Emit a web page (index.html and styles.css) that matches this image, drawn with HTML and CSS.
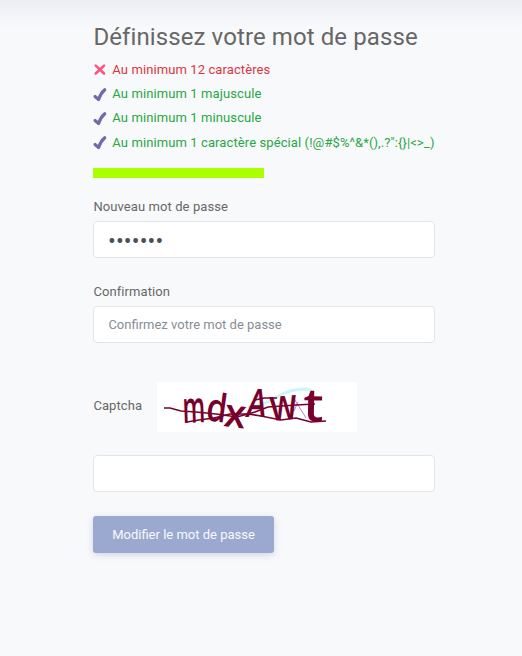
FILE: index.html
```html
<!DOCTYPE html>
<html lang="fr">
<head>
<meta charset="utf-8">
<title>Définissez votre mot de passe</title>
<link rel="stylesheet" href="styles.css">
</head>
<body>
<svg width="0" height="0" class="defs">
  <symbol id="check" viewBox="0 0 12 13"><path d="M1.7 8.2 4.8 10.9C5.8 7.4 7.5 4.7 10.1 2.4" fill="none" stroke="#7467aa" stroke-width="2.7" stroke-linecap="round" stroke-linejoin="round"/></symbol>
</svg>
<main class="form">
  <h1>Définissez votre mot de passe</h1>
  <ul class="rules">
    <li class="bad"><svg class="cross" viewBox="0 0 12 13"><path d="M2.3 3.2 9.5 10M9.5 3.2 2.3 10" stroke="#ff527d" stroke-width="2.2" stroke-linecap="round"/></svg><span>Au minimum 12 caractères</span></li>
    <li><svg><use href="#check"/></svg><span>Au minimum 1 majuscule</span></li>
    <li><svg><use href="#check"/></svg><span>Au minimum 1 minuscule</span></li>
    <li><svg><use href="#check"/></svg><span>Au minimum 1 caractère spécial (!@#$%^&amp;*(),.?":{}|&lt;&gt;_)</span></li>
  </ul>
  <div class="strength"></div>
  <label for="pw">Nouveau mot de passe</label>
  <div class="field"><input id="pw" type="password" value="aaaaaaa"></div>
  <label for="confirm" class="second">Confirmation</label>
  <div class="field"><input id="confirm" type="text" placeholder="Confirmez votre mot de passe"></div>
  <div class="captcha">
    <span>Captcha</span>
    <svg width="200" height="50" viewBox="0 0 200 50">
      <rect width="200" height="50" fill="#fff"/>
      <path d="M91 25Q108 23 120 15T150 7L155 9" fill="none" stroke="#c9f6f8" stroke-width="3"/>
      <path d="M136 15 149 36M141 20l-4 9" fill="none" stroke="#c77bcf" stroke-width="1"/>
      <g class="glyphs">
        <text transform="translate(26 41) rotate(-2) scale(.54 1)" font-size="44">m</text>
        <text transform="translate(48 38) rotate(8) scale(.84 1)" font-size="39">d</text>
        <text transform="translate(66 44) rotate(7) scale(.98 1)" font-size="40">x</text>
        <text transform="translate(88 35) skewX(-10) scale(.76 1)" font-size="39">A</text>
        <text transform="translate(114 39) rotate(-5) scale(.76 1)" font-size="44">w</text>
        <text transform="translate(146 39) rotate(1) scale(1.12 1)" font-size="46">t</text>
      </g>
      <g fill="none" stroke="#78002c" stroke-width="1.7">
        <path d="M7 26 13 26 24 29 39 30 59 32 80 35 98 30 111 25 139 23 158 22"/>
        <path d="M30 40 42 38 57 36 73 32 91 32 104 34 124 38 139 36 154 40 169 39"/>
        <path d="M98 18 107 16 120 16"/>
      </g>
    </svg>
  </div>
  <div class="field"><input type="text" aria-label="Captcha"></div>
  <button type="button">Modifier le mot de passe</button>
</main>
</body>
</html>
```
FILE: styles.css
```css
* { box-sizing: border-box; }
body {
  margin: 0;
  min-height: 656px;
  background: #f8f9fb linear-gradient(#edeef4, #f8f9fb 28px) no-repeat;
  background-size: 100% 28px;
  color: #676767;
  font: 13px/20px Roboto, sans-serif;
}
.defs { display: block; }
.form { width: 342px; margin-left: 93px; padding-top: 22px; }
h1 { margin: 0 0 6px; padding-left: .4px; font-size: 24px; line-height: 30px; font-weight: 400; letter-spacing: .1px; white-space: nowrap; }
.rules { list-style: none; margin: 0; padding: 0; color: #28a745; letter-spacing: .1px; }
.rules li { display: flex; align-items: center; height: 24.2px; white-space: nowrap; }
.rules svg { width: 14px; height: 15px; margin: 0 5.3px 0 0; flex: none; }
.rules .cross { margin-top: -2px; }
.rules .bad { color: #dc3545; }
.strength { width: 171px; height: 10px; margin: 13.2px 0 19px; background: #af0; }
label { display: block; margin-bottom: 4px; padding-left: .4px; letter-spacing: .09px; }
.second { margin-top: 24px; }
.field { height: 37px; border: 1px solid #e2e5e9; border-radius: 4px; background: #fff; }
input { display: block; width: 100%; height: 35px; padding: 0 14.4px; border: 0; outline: 0; background: none; color: #495057; font: 13px Roboto, sans-serif; }
input[type="password"] { padding: 4px 14px 0; font-size: 23px; letter-spacing: .15px; }
input::placeholder { color: #868e96; opacity: 1; }
.captcha { display: flex; align-items: center; height: 50px; margin: 39px 0 23px; }
.captcha span { width: 64px; margin-top: -2px; padding-left: .4px; letter-spacing: .09px; }
.captcha svg { flex: none; overflow: visible; }
.glyphs { font-family: "Open Sans", sans-serif; font-weight: 600; fill: #78002c; }
button { display: block; width: 181px; height: 37px; margin-top: 24px; padding: 0; border: 0; border-radius: 3px; background: #9ba8cf; box-shadow: 0 2px 6px #acb5d680; color: #f8f9fd; font: 400 13px Roboto, sans-serif; letter-spacing: 0; }
```
